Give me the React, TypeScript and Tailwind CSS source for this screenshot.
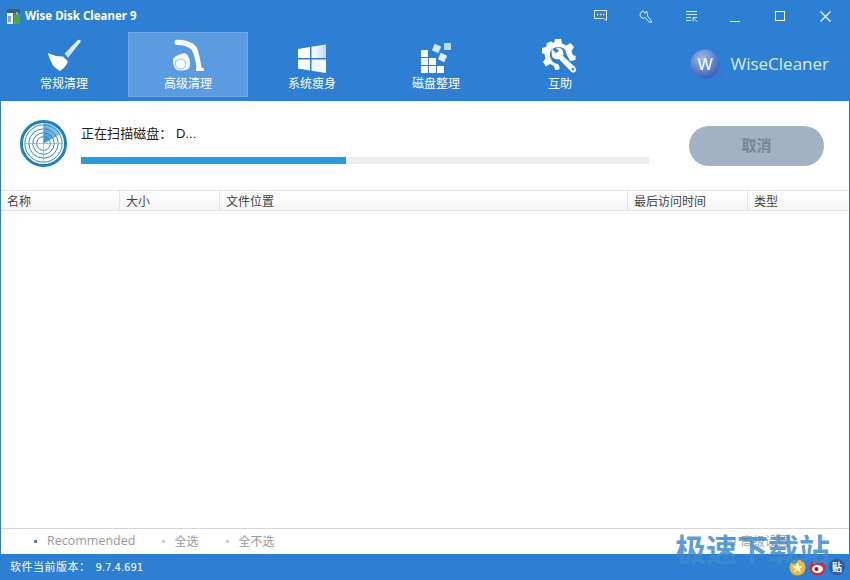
import React from "react";

const CJK = '"Liberation Sans","Noto Sans CJK SC",sans-serif';

function Broom() {
  return (
    <svg width="36" height="36" viewBox="0 0 36 36">
      <defs>
        <linearGradient id="bh" x1="0" y1="1" x2="1" y2="0">
          <stop offset="0" stopColor="#b9d5f1" />
          <stop offset="1" stopColor="#ffffff" />
        </linearGradient>
      </defs>
      <path d="M18.5 15.5 L31.5 2.5 Q33.5 1 34.5 2.5 Q35 4 33.5 5 L22 20 Z" fill="url(#bh)" />
      <path d="M2 15 Q9 18.5 17 18.5 L22 23.5 Q20 29 14 33 Q5 29 2 15 Z" fill="#fff" />
    </svg>
  );
}

function Vacuum() {
  return (
    <svg width="36" height="36" viewBox="0 0 36 36">
      <path d="M4.5 4 Q4.5 1.5 7 1.7 Q12 1.5 17 3 Q24 5 26.5 9 Q29 14 31.7 30.5 H26.7 Q25 17 21.7 12 Q17 7 7 7 Q4.5 7 4.5 4 Z" fill="#fff" />
      <path d="M26 30 H33.5 L34 33 H26 Z" fill="#fff" />
      <path d="M15 15.3 Q19.5 18 20 23.7 Q20.5 29 18.3 31 Q12 33.5 6.7 32 Q2 28 3.3 20.3 Q8 16 15 15.3 Z" fill="#f2f7fd" />
      <circle cx="10.5" cy="26" r="5.6" fill="#9cc3ea" />
      <circle cx="10.5" cy="26" r="4.6" fill="#fff" />
    </svg>
  );
}

function Win() {
  return (
    <svg width="30" height="30" viewBox="0 0 30 30">
      <defs>
        <linearGradient id="wg" x1="0" y1="0" x2="1" y2="0">
          <stop offset="0" stopColor="#fff" />
          <stop offset="1" stopColor="#c3dbf3" />
        </linearGradient>
      </defs>
      <path d="M1 5 L13 3 V14 H1 Z" fill="#fff" />
      <path d="M14.5 2.8 L29 0.5 V14 H14.5 Z" fill="url(#wg)" />
      <path d="M1 15.5 H13 V26.5 L1 24.5 Z" fill="#fff" />
      <path d="M14.5 15.5 H29 V29 L14.5 26.8 Z" fill="#f2f7fd" />
    </svg>
  );
}

function Defrag() {
  return (
    <svg width="32" height="32" viewBox="0 0 32 32">
      <g fill="#fff">
        <rect x="1" y="8" width="7" height="7" />
        <rect x="1" y="16" width="7" height="7" />
        <rect x="9" y="16" width="7" height="7" />
        <rect x="1" y="24" width="7" height="7" />
        <rect x="9" y="24" width="7" height="7" />
        <rect x="17" y="24" width="7" height="7" />
      </g>
      <rect x="13" y="3" width="7" height="7" fill="#d6e6f7" transform="rotate(25 16.5 6.5)" />
      <rect x="24" y="1" width="7" height="7" fill="#bcd7f2" />
      <rect x="19" y="12" width="7" height="7" fill="#e4eefa" transform="rotate(25 22.5 15.5)" />
    </svg>
  );
}

function Gear() {
  return (
    <svg width="36" height="36" viewBox="0 0 36 36">
      <g fill="#fff">
        <path d="M13 1 H19 L20 5.5 L24.5 7.5 L28.5 5 L32 9 L29.5 13 L31 17 L33.5 18 V22 L28 23 L24 15 Q24 9 16 9 Q7 10 8 18 Q9 25 16 26 L18 30 L16 32 H13 L12 28 L8 26 L4 28.5 L1 24 L3.5 20.5 L2.5 16 L-1 15 L0 10 L4 9 L5 5 L9 3.5 L12 5 Z" />
        <path d="M10 11 L14 15 L17 13 L14 10 Q19 9 21 13 Q22 16 21 18 L33 29 Q35.5 32 33 34 Q30.5 35.5 28.5 33 L17 21 Q12 22 10 18 Q9 14 10 11 Z" />
      </g>
      <circle cx="31" cy="31" r="1.3" fill="#2f80d3" />
    </svg>
  );
}

function Radar() {
  return (
    <svg width="47" height="47" viewBox="0 0 48 48">
      <defs>
        <linearGradient id="sw" x1="0" y1="1" x2="1" y2="0">
          <stop offset="0" stopColor="#2a8ccb" />
          <stop offset="1" stopColor="#bfe0f2" />
        </linearGradient>
      </defs>
      <circle cx="24" cy="24" r="22.5" fill="#fff" stroke="#1f7fb8" strokeWidth="3" />
      <path d="M24 24 L24 3 A21 21 0 0 1 42 14 Z" fill="url(#sw)" />
      <g fill="none" stroke="#2a87c0" strokeWidth="1">
        <circle cx="24" cy="24" r="19" />
        <circle cx="24" cy="24" r="15" />
        <circle cx="24" cy="24" r="11" />
        <circle cx="24" cy="24" r="7" />
      </g>
      <path d="M24 5 V43 M5 24 H43" stroke="#6eb0d8" strokeWidth=".7" />
    </svg>
  );
}

function NavItem({ icon, label, active }: { icon: React.ReactNode; label: string; active?: boolean }) {
  return (
    <div
      className={
        "w-[120px] h-[65px] flex flex-col items-center border " +
        (active ? "bg-[#5b9be0] border-[#6ea8e6]" : "border-transparent")
      }
    >
      <div className="h-[41px] w-full flex items-end justify-center">{icon}</div>
      <div className="mt-[1px] text-[12px] leading-[18px] text-white">{label}</div>
    </div>
  );
}

function Col({ w, label, grow }: { w?: string; label: string; grow?: boolean }) {
  return (
    <div className={(grow ? "flex-1 " : "") + (w ?? "") + " h-full pl-[6px] pt-[2px] border-r border-[#e4e4e4] flex items-center text-[12px] text-[#444] last:border-r-0"}>
      {label}
    </div>
  );
}

export default function App() {
  return (
    <div
      className="relative w-[850px] h-[580px] overflow-hidden bg-white flex flex-col"
      style={{ fontFamily: CJK }}
    >
      {/* title */}
      <div className="h-[32px] bg-[#2d7fd3] flex items-center shrink-0">
        <svg className="ml-[6px]" width="15" height="18" viewBox="0 0 15 18">
          <rect x="1" y="2" width="13" height="4" fill="#4a5a68" />
          <rect x="1" y="6" width="6" height="11" fill="#e8edf2" />
          <rect x="2" y="9" width="3" height="6" fill="#8fa2b3" />
          <rect x="8" y="8" width="6" height="9" fill="#4fa83d" />
          <rect x="10" y="5" width="2" height="3" fill="#7cc860" />
        </svg>
        <span className="ml-[4px] text-[11.5px] font-bold text-white" style={{ fontFamily: '"Noto Sans",sans-serif' }}>
          Wise Disk Cleaner 9
        </span>
        <div className="ml-auto flex items-center text-white">
          <div className="w-[13px] mr-[32px]">
            <svg width="13" height="12" viewBox="0 0 13 12" fill="none" stroke="#dfeaf6" strokeWidth="1">
              <path d="M.5 .5 H12.5 V10.5 L9.5 8.5 H.5 Z" />
              <path d="M3 4.5 H4.5 M6 4.5 H7.5 M9 4.5 H10.5" strokeWidth="1.5" />
            </svg>
          </div>
          <div className="mr-[32px]">
            <svg width="14" height="13" viewBox="0 0 14 13" fill="none" stroke="#dfeaf6" strokeWidth="1">
              <path d="M4 .8 Q1 2 1 5 Q1.5 8 4.5 8.5 L6 7.5 L10.5 12.5 L13 12 L8.5 6 Q9 3.5 7.5 1 L6 3.5 Z" />
            </svg>
          </div>
          <div className="mr-[32px]">
            <svg width="13" height="13" viewBox="0 0 13 13" fill="none" stroke="#dfeaf6" strokeWidth="1">
              <path d="M1 1.5 H12 M1 4.5 H12 M1 7.5 H6 M1 10.5 H6" />
              <path d="M8 11.5 V7.5 H12 M8.3 7.8 L12 11.5" />
            </svg>
          </div>
          <div className="mr-[35px] h-[12px] flex items-end">
            <div className="w-[10px] h-[1px] bg-white" />
          </div>
          <div className="mr-[35px] w-[10px] h-[10px] border border-white" />
          <div className="mr-[19px]">
            <svg width="11" height="11" viewBox="0 0 11 11" stroke="#fff" strokeWidth="1.1">
              <path d="M.5 .5 L10.5 10.5 M10.5 .5 L.5 10.5" />
            </svg>
          </div>
        </div>
      </div>

      {/* nav */}
      <div className="h-[69px] bg-[#2d7fd3] flex items-start pl-[4px] gap-[4px] shrink-0">
        <NavItem icon={<Broom />} label="常规清理" />
        <NavItem icon={<Vacuum />} label="高级清理" active />
        <NavItem icon={<Win />} label="系统瘦身" />
        <NavItem icon={<Defrag />} label="磁盘整理" />
        <NavItem icon={<Gear />} label="互助" />
        <div className="ml-auto mr-[21px] mt-[17px] flex items-center">
          <svg width="34" height="30" viewBox="0 0 34 30">
            <defs>
              <radialGradient id="wc" cx=".4" cy=".3" r=".8">
                <stop offset="0" stopColor="#9db8ea" />
                <stop offset="1" stopColor="#2a55b4" />
              </radialGradient>
            </defs>
            <circle cx="30" cy="24" r="4" fill="#3f74c6" />
            <circle cx="15" cy="15" r="14.5" fill="url(#wc)" />
            <text x="15" y="21" textAnchor="middle" fontSize="16" fontWeight="500" fill="#fff" fontFamily="Liberation Sans">W</text>
          </svg>
          <span className="ml-[6px] text-[17px] leading-[24px] text-[#dcebfa]" style={{ fontFamily: '"Open Sans",sans-serif' }}>
            WiseCleaner
          </span>
        </div>
      </div>

      {/* body */}
      <div className="flex-1 flex flex-col border-x border-[#2d7fd3] min-h-0">
        <div className="h-[89px] shrink-0 flex items-start relative">
          <div className="ml-[19px] mt-[19px]">
            <Radar />
          </div>
          <div className="ml-[14px] mt-[24px] w-[568px]">
            <div className="text-[13px] leading-[18px] text-[#222] tracking-[0.05px]">正在扫描磁盘：&nbsp;D...</div>
            <div className="mt-[14px] h-[7px] bg-[#eeeeee]">
              <div className="h-full w-[265px] bg-[#2a9ae0]" />
            </div>
          </div>
          <div className="ml-[40px] mt-[25px] w-[135px] h-[40px] rounded-[20px] bg-[#9fb3c4] flex items-center justify-center text-[15px] font-bold text-[#73879a]">
            取消
          </div>
        </div>

        <div className="h-[21px] shrink-0 flex border-y border-[#e4e4e4] bg-gradient-to-b from-[#ffffff] to-[#f5f5f5]">
          <Col w="w-[119px]" label="名称" />
          <Col w="w-[100px]" label="大小" />
          <Col grow label="文件位置" />
          <Col w="w-[120px]" label="最后访问时间" />
          <Col w="w-[101px]" label="类型" />
        </div>

        <div className="flex-1" />

        <div className="h-[26px] shrink-0 border-t border-[#d6d6d6] flex items-center text-[12px] text-[#9a9a9a]">
          <span className="ml-[33px] w-[3px] h-[3px] bg-[#5c7f9c]" />
          <span className="ml-[10px] text-[12.5px]" style={{ fontFamily: '"Open Sans",sans-serif' }}>Recommended</span>
          <span className="ml-[27px] w-[3px] h-[3px] bg-[#c8d6e2]" />
          <span className="ml-[9px]">全选</span>
          <span className="ml-[28px] w-[3px] h-[3px] bg-[#c8d6e2]" />
          <span className="ml-[9px]">全不选</span>
          <svg className="ml-auto" width="12" height="12" viewBox="0 0 12 12">
            <path d="M1 2 H11 V9 H1 Z" fill="none" stroke="#9a9a9a" />
            <path d="M3 5 H9" stroke="#9a9a9a" />
          </svg>
          <span className="ml-[5px] mr-[60px] text-[#a0a0a0]">高级设置</span>
        </div>
      </div>

      {/* status */}
      <div className="h-[26px] shrink-0 bg-[#2d7fd3] flex items-center pl-[10px] text-[11px] text-white">
        <span className="tracking-[0.5px]">软件当前版本：</span>
        <span className="ml-[5px]" style={{ fontFamily: '"DejaVu Sans",sans-serif', fontSize: 10 }}>9.7.4.691</span>
        <div className="ml-auto mr-[5px] flex items-center gap-[3px]">
          <svg width="17" height="17" viewBox="0 0 17 17">
            <circle cx="8.5" cy="8.5" r="8" fill="#e8b93a" />
            <path d="M8.5 3 L10 7 L14 7.2 L10.9 9.6 L12 13.5 L8.5 11.2 L5 13.5 L6.1 9.6 L3 7.2 L7 7 Z" fill="#fff6d0" />
          </svg>
          <svg width="17" height="17" viewBox="0 0 17 17">
            <circle cx="8.5" cy="8.5" r="8" fill="#cf2b3a" />
            <ellipse cx="8.5" cy="10" rx="5.5" ry="4" fill="#fff" />
            <circle cx="7.5" cy="10" r="2" fill="#8a1c26" />
          </svg>
          <div className="w-[16px] h-[16px] rounded-full bg-[#2b5c94] flex items-center justify-center text-[10px] text-white font-bold">贴</div>
        </div>
      </div>

      {/* watermark */}
      <div
        className="absolute left-[675px] top-[528px] text-[31px] leading-[40px] font-bold text-[#3d8ccf]/85 whitespace-nowrap"
        style={{ fontFamily: '"Noto Sans CJK SC",sans-serif' }}
      >
        极速下载站
      </div>
    </div>
  );
}
